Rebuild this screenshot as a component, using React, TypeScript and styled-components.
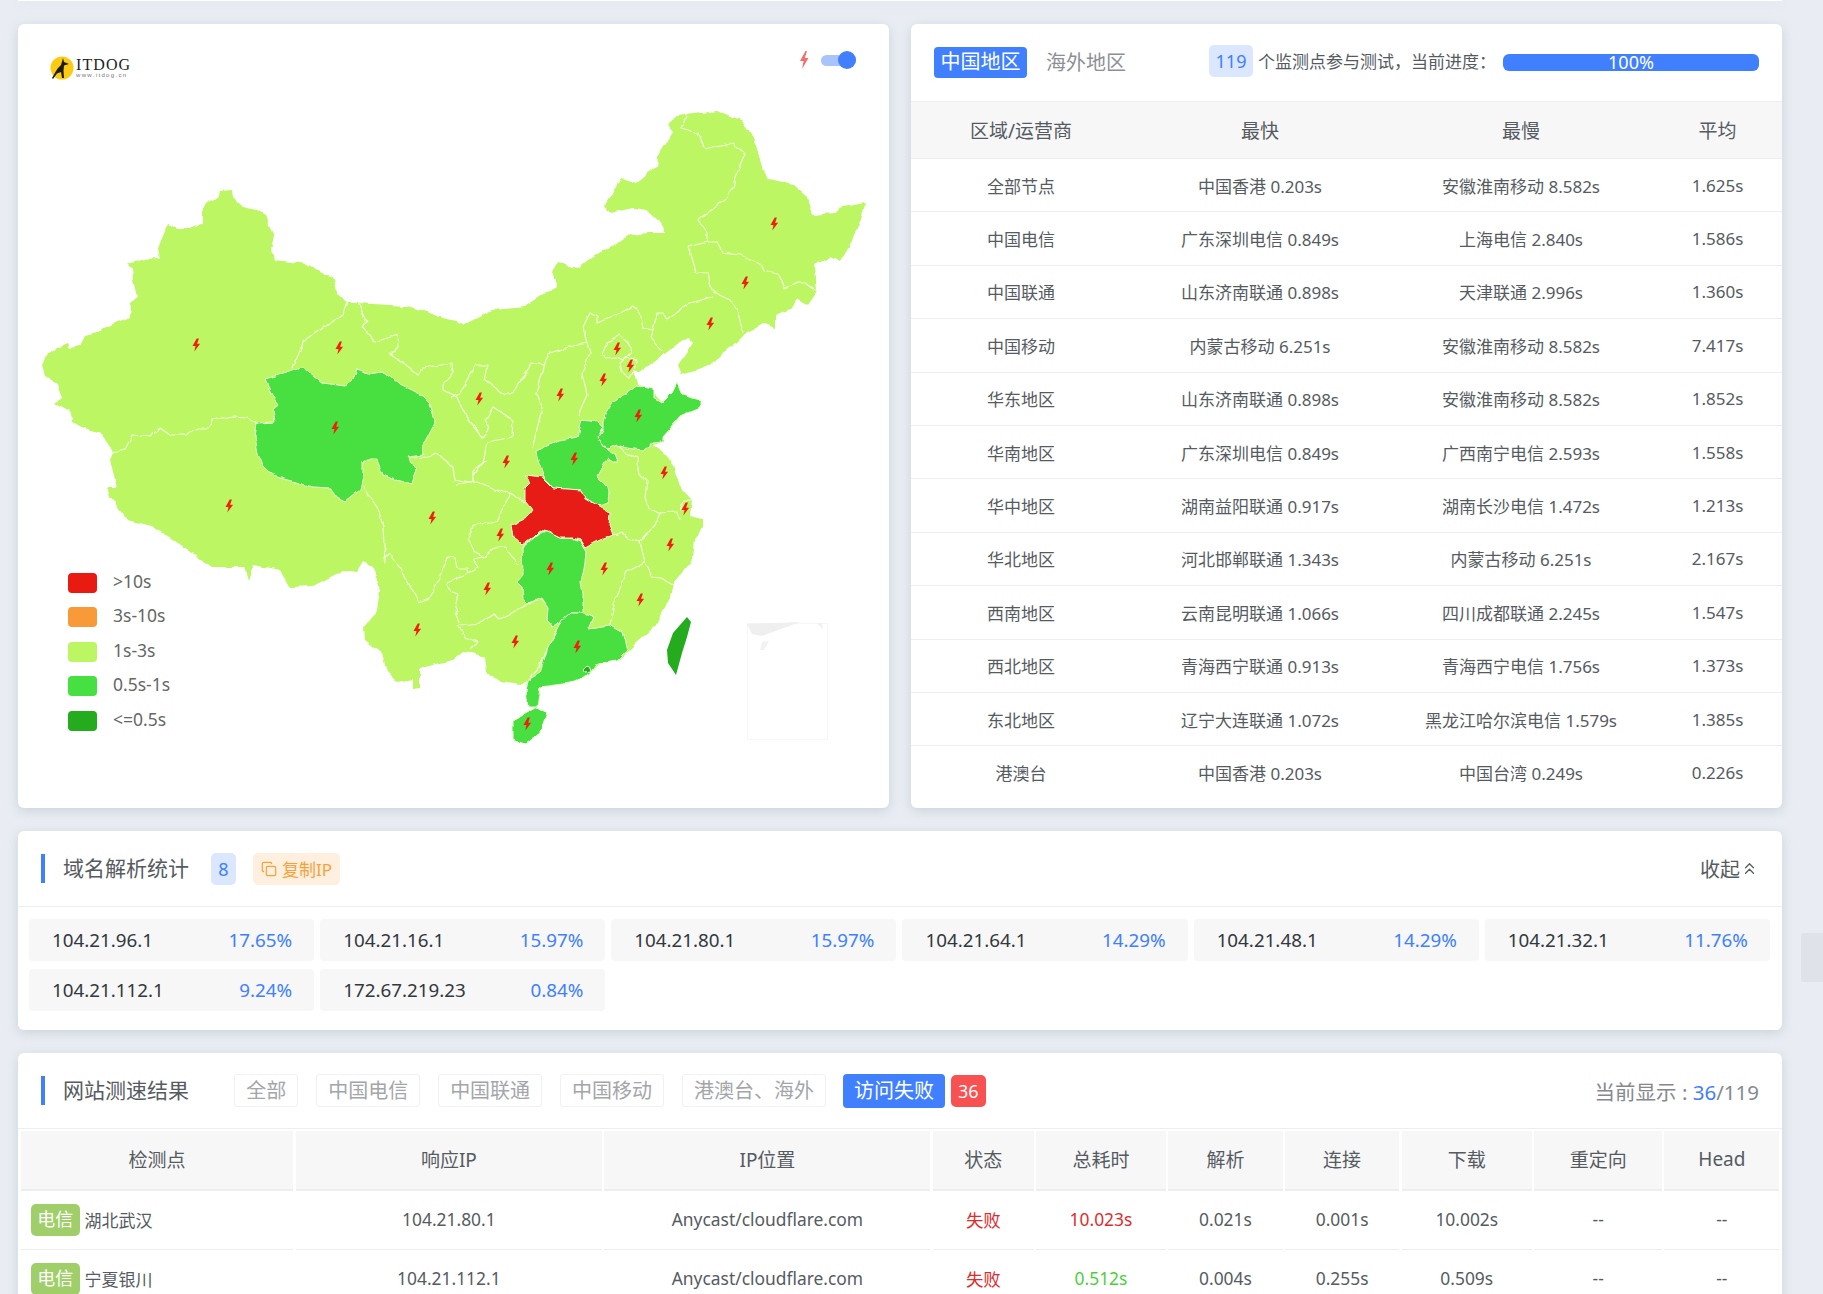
import React from 'react'
import styled, { createGlobalStyle } from 'styled-components'
import { ChevronsUp, Copy } from 'lucide-react'

const GlobalStyle = createGlobalStyle`
  html, body {
    margin: 0;
    height: 100%;
    overflow: hidden;
    background: #e9edf3;
  }
  body {
    font-family: "Noto Sans", "Noto Sans CJK SC", sans-serif;
    color: #555b61;
  }
  * {
    box-sizing: border-box;
  }
`

const BLUE = '#4080ff'
const LIGHT = '#bdf663'
const MID = '#46e040'
const RED = '#e81a12'
const DARK = '#25ab1e'

const Page = styled.div`
  display: flex;
  flex-direction: column;
  gap: 23px;
  padding: 0 41px 0 18px;
  height: 1294px;
  overflow: hidden;
`

const Card = styled.div`
  background: #fff;
  border-radius: 6px;
  box-shadow: 0 3px 12px rgba(110, 125, 150, 0.24);
`

const TopSliver = styled(Card)`
  height: 1px;
  flex: none;
  border-radius: 0 0 6px 6px;
`

const TwoCols = styled.div`
  display: grid;
  grid-template-columns: 871px 871px;
  gap: 22px;
  height: 784px;
  flex: none;
`

const MapCard = styled(Card)`
  position: relative;
  overflow: hidden;
`

const MapSvg = styled.svg`
  display: block;
  width: 871px;
  height: 784px;
`

const Logo = styled.div`
  position: absolute;
  left: 32px;
  top: 32px;
  display: flex;
  align-items: center;
  gap: 2px;
`

const LogoText = styled.div`
  display: flex;
  flex-direction: column;
  color: #222;
`

const LogoName = styled.span`
  font-family: "Liberation Serif", serif;
  font-size: 16px;
  line-height: 14px;
  letter-spacing: 1.1px;
`

const LogoUrl = styled.span`
  font-family: "Liberation Sans", sans-serif;
  font-size: 6px;
  line-height: 7px;
  letter-spacing: 1.35px;
  color: #777;
`

const SwitchRow = styled.div`
  position: absolute;
  right: 33px;
  top: 27px;
  display: flex;
  align-items: center;
  gap: 12px;
`

const SwitchTrack = styled.div`
  position: relative;
  width: 35px;
  height: 11px;
  border-radius: 6px;
  background: #a9c4fb;
`

const SwitchKnob = styled.div`
  position: absolute;
  right: 0;
  top: -3.5px;
  width: 18px;
  height: 18px;
  border-radius: 50%;
  background: ${BLUE};
`

const Legend = styled.ul`
  position: absolute;
  left: 50px;
  top: 549px;
  margin: 0;
  padding: 0;
  list-style: none;
  display: flex;
  flex-direction: column;
  gap: 14.4px;
`

const LegendItem = styled.li`
  display: flex;
  align-items: center;
  gap: 16px;
  height: 20px;
  font-size: 17.5px;
  color: #666;
`

const LegendLabel = styled.span`
  margin-top: -4px;
`

const Swatch = styled.span<{ $color: string }>`
  width: 29px;
  height: 20px;
  border-radius: 4px;
  background: ${(p) => p.$color};
`

const StatHead = styled.div`
  display: flex;
  align-items: center;
  height: 78px;
  padding: 0 23px;
  border-bottom: 1px solid #eceef0;
`

const TabOn = styled.div`
  width: 93px;
  height: 31px;
  border-radius: 4px;
  background: ${BLUE};
  color: #fff;
  font-size: 20px;
  line-height: 29px;
  text-align: center;
`

const TabOff = styled.div`
  margin-left: 19px;
  margin-top: -2px;
  font-size: 20px;
  color: #8c9095;
  width: 163px;
`

const CountBadge = styled.span`
  display: inline-block;
  width: 44px;
  height: 32px;
  margin-top: -3px;
  border-radius: 5px;
  background: #dbe7ff;
  color: ${BLUE};
  font-size: 18px;
  line-height: 32px;
  text-align: center;
`

const StatText = styled.span`
  margin-left: 5px;
  margin-top: -4px;
  font-size: 17px;
  color: #555b61;
  width: 245px;
  white-space: nowrap;
`

const Progress = styled.div`
  width: 256px;
  height: 17px;
  border-radius: 6px;
  background: ${BLUE};
  color: #fff;
  font-size: 18px;
  line-height: 16px;
  text-align: center;
`

const StatRow = styled.div<{ $head?: boolean }>`
  display: grid;
  grid-template-columns: 220px 258px 264px 129px;
  align-items: center;
  height: ${(p) => (p.$head ? '57px' : '53.4px')};
  text-align: center;
  white-space: nowrap;
  font-size: ${(p) => (p.$head ? '19px' : '17px')};
  background: ${(p) => (p.$head ? '#f7f7f8' : '#fff')};
  border-bottom: 1px solid #eceef0;
  &:last-child {
    border-bottom: 0;
  }
`

const SectionHead = styled.div<{ $h: number }>`
  display: flex;
  align-items: center;
  height: ${(p) => p.$h}px;
  padding: 0 23px;
  border-bottom: 1px solid #eceef0;
`

const TitleBar = styled.h2`
  margin: 0;
  padding-left: 18px;
  border-left: 4px solid ${BLUE};
  font-size: 21px;
  font-weight: 400;
  line-height: 29px;
  color: #555b61;
  white-space: nowrap;
`

const CountTag = styled(CountBadge)`
  width: 25px;
  margin-left: 22px;
  margin-top: 0;
`

const CopyTag = styled.span`
  display: flex;
  align-items: center;
  gap: 5px;
  margin-left: 17px;
  width: 87px;
  height: 32px;
  padding-left: 8px;
  border-radius: 5px;
  background: #ffefdf;
  color: #f7a239;
  font-size: 17px;
  white-space: nowrap;
`

const Collapse = styled.div`
  display: flex;
  align-items: center;
  margin-left: auto;
  font-size: 20px;
  color: #555b61;
`

const IpGrid = styled.div`
  display: grid;
  grid-template-columns: repeat(6, 285.17px);
  gap: 8px 6px;
  padding: 12px 11px 19px;
`

const IpItem = styled.div`
  display: flex;
  align-items: center;
  justify-content: space-between;
  height: 42px;
  padding: 0 22px 0 23px;
  border-radius: 4px;
  background: #f7f7f8;
  font-size: 18.8px;
  color: #33383d;
`

const Blue = styled.span`
  color: ${BLUE};
`

const Filters = styled.div`
  display: flex;
  align-items: center;
  margin-left: 45px;
  gap: 17.6px;
`

const FilterBtn = styled.button`
  height: 33px;
  padding: 0 11.2px;
  border: 1px solid #f1f1f1;
  border-radius: 3px;
  background: #fff;
  color: #a3a6a9;
  font-family: inherit;
  font-size: 20px;
  line-height: 29px;
  white-space: nowrap;
`

const FilterOn = styled(FilterBtn)`
  height: 34px;
  margin-left: -1px;
  border: 0;
  border-radius: 4px;
  background: ${BLUE};
  color: #fff;
`

const FailBadge = styled.span`
  display: inline-block;
  width: 35px;
  height: 32px;
  margin-left: -12px;
  border-radius: 5px;
  background: #f75151;
  color: #fff;
  font-size: 18px;
  line-height: 32px;
  text-align: center;
`

const ShowCount = styled.div`
  margin-left: auto;
  font-size: 20.5px;
  color: #85898e;
  white-space: nowrap;
`

const ResultTable = styled.div`
  padding: 2px 3px 0 2.5px;
`

const ResultRow = styled.div`
  display: grid;
  grid-template-columns: 272.9px 306.2px 326.1px 101px 129.5px 114.6px 114px 130.5px 127.6px 115px;
  column-gap: 2.4px;
`

const HeadCell = styled.div`
  height: 60px;
  padding-bottom: 2px;
  display: flex;
  align-items: center;
  justify-content: center;
  background: #f7f7f8;
  border-bottom: 2px solid #eceef0;
  font-size: 19px;
  color: #555b61;
`

const Cell = styled.div<{ $color?: string }>`
  height: 59px;
  padding-bottom: 2px;
  display: flex;
  align-items: center;
  justify-content: center;
  border-bottom: 1px solid #eceef0;
  font-size: 17.4px;
  color: ${(p) => p.$color || '#555b61'};
  white-space: nowrap;
`

const NodeCell = styled(Cell)`
  justify-content: flex-start;
  padding-left: 10.5px;
  gap: 5px;
  font-size: 17px;
`

const IspTag = styled.span`
  width: 48.5px;
  height: 32px;
  margin-top: 2px;
  border-radius: 5px;
  background: #a0cf6a;
  color: #fff;
  font-size: 18px;
  line-height: 30px;
  text-align: center;
`

const ScrollHandle = styled.div`
  position: fixed;
  right: 0;
  top: 933px;
  width: 22px;
  height: 49px;
  border-radius: 3px 0 0 3px;
  background: #dfe3e9;
`

const statRows = [
  ['全部节点', '中国香港 0.203s', '安徽淮南移动 8.582s', '1.625s'],
  ['中国电信', '广东深圳电信 0.849s', '上海电信 2.840s', '1.586s'],
  ['中国联通', '山东济南联通 0.898s', '天津联通 2.996s', '1.360s'],
  ['中国移动', '内蒙古移动 6.251s', '安徽淮南移动 8.582s', '7.417s'],
  ['华东地区', '山东济南联通 0.898s', '安徽淮南移动 8.582s', '1.852s'],
  ['华南地区', '广东深圳电信 0.849s', '广西南宁电信 2.593s', '1.558s'],
  ['华中地区', '湖南益阳联通 0.917s', '湖南长沙电信 1.472s', '1.213s'],
  ['华北地区', '河北邯郸联通 1.343s', '内蒙古移动 6.251s', '2.167s'],
  ['西南地区', '云南昆明联通 1.066s', '四川成都联通 2.245s', '1.547s'],
  ['西北地区', '青海西宁联通 0.913s', '青海西宁电信 1.756s', '1.373s'],
  ['东北地区', '辽宁大连联通 1.072s', '黑龙江哈尔滨电信 1.579s', '1.385s'],
  ['港澳台', '中国香港 0.203s', '中国台湾 0.249s', '0.226s'],
]

const ipRows = [
  ['104.21.96.1', '17.65%'],
  ['104.21.16.1', '15.97%'],
  ['104.21.80.1', '15.97%'],
  ['104.21.64.1', '14.29%'],
  ['104.21.48.1', '14.29%'],
  ['104.21.32.1', '11.76%'],
  ['104.21.112.1', '9.24%'],
  ['172.67.219.23', '0.84%'],
]

const filters = ['全部', '中国电信', '中国联通', '中国移动', '港澳台、海外']
const resultHead = ['检测点', '响应IP', 'IP位置', '状态', '总耗时', '解析', '连接', '下载', '重定向', 'Head']

const results = [
  { node: '湖北武汉', ip: '104.21.80.1', total: '10.023s', totalColor: '#e02b2b', dns: '0.021s', conn: '0.001s', down: '10.002s' },
  { node: '宁夏银川', ip: '104.21.112.1', total: '0.512s', totalColor: '#4ccf3a', dns: '0.004s', conn: '0.255s', down: '0.509s' },
]

const legend = [
  { label: '>10s', color: RED },
  { label: '3s-10s', color: '#f79a37' },
  { label: '1s-3s', color: LIGHT },
  { label: '0.5s-1s', color: MID },
  { label: '<=0.5s', color: DARK },
]

// outline of the whole country, page pixels
const outline =
  '42,365 45,357 58,347 68,343 70,348 80,346 85,336 97,333 103,328 130,317 131,303 137,297 133,280 132,268 128,264 152,257 160,259 158,248 168,224 178,228 193,228 203,223 203,207 207,202 218,198 220,190 232,189 233,197 243,207 257,210 265,215 275,235 272,250 275,260 307,264 323,273 333,277 338,293 347,303 358,303 407,306 422,310 438,317 457,321 463,325 493,310 525,307 540,297 557,287 552,272 557,263 578,268 592,257 617,243 632,235 647,233 664,233 660,222 647,210 633,208 610,213 605,206 621,178 637,183 657,167 658,157 673,132 667,125 677,116 717,111 743,122 752,135 762,165 768,180 793,185 807,197 812,215 835,213 838,208 865,203 861,215 852,242 840,262 830,257 815,265 817,292 808,305 798,299 793,308 775,315 775,327 765,323 743,335 730,348 707,367 682,375 678,365 693,343 688,337 680,342 657,360 640,372 633,372 637,383 647,387 655,395 662,402 672,393 677,383 682,395 700,400 700,408 682,415 663,437 663,442 653,445 663,452 672,462 680,487 692,500 690,515 703,518 703,528 695,538 693,560 673,583 670,597 663,610 655,627 637,642 627,652 618,660 600,663 590,675 570,683 540,687 537,707 528,707 526,692 528,680 520,685 500,682 487,672 485,657 472,653 463,652 453,660 420,668 420,688 413,689 413,680 398,683 387,672 382,653 365,640 364,627 377,610 380,590 373,567 363,562 357,572 344,570 313,586 290,587 281,570 253,565 248,580 244,567 212,567 187,549 152,526 127,520 110,497 107,487 117,487 110,460 113,453 102,433 83,428 73,422 72,412 55,403 62,398 58,383 45,377'

const borders = [
  '113,453 125,450 132,435 150,437 160,428 170,435 185,435 197,428 208,428 213,420 233,416 247,417 257,423',
  '347,303 343,313 332,322 317,332 303,342 293,368',
  '358,303 367,322 362,327 375,342 397,335 398,347 390,355 410,368 418,375 422,368 452,363 453,372 443,385 443,390 458,398',
  '450,397 460,393 475,365 488,365 485,380 505,395',
  '458,397 468,420 482,437 490,428 485,420 493,407 513,420 512,437 487,442 483,463 473,475 475,482 457,485',
  '505,395 513,393 532,363 545,365',
  '545,363 537,393 542,407 533,447',
  '545,363 550,353 565,348 587,343',
  '587,343 590,353 582,373 587,395 578,415',
  '587,343 583,327 590,313 597,317 597,323 613,317 633,306 640,313 643,328 653,330 650,337 662,352',
  '653,330 657,313 663,313 667,320 690,303 713,297',
  '713,292 730,300 737,310 743,333',
  '603,355 608,342 620,335 628,342 632,352 623,360 617,357 605,358 603,355',
  '620,363 627,357 637,360 635,372 628,377 622,372 620,363',
  '688,247 707,242 717,242 722,253 740,255 760,263 763,270 778,273 785,288 798,283 805,283 817,292',
  '688,247 695,272 708,273 712,290 715,292',
  '687,117 682,128 698,133 705,150 733,143 745,155 735,177 733,188 725,200 698,220 707,233 707,242',
  '363,487 378,507 383,527 385,563',
  '385,547 383,560 390,553 398,565 407,580 418,602 430,598 437,583 448,557 455,558 457,568 467,568 468,573',
  '468,573 447,582 450,592 458,595 455,607 460,623',
  '460,625 480,623 493,613 500,618 517,610 540,598 548,607',
  '458,625 465,637 478,642 472,650',
  '557,630 548,647 540,667 528,680',
  '410,458 427,457 437,453 453,467 455,480 468,483 478,482 503,492 510,493 525,502',
  '473,482 473,470 487,460',
  '510,493 503,507 497,522 473,525 468,540 473,548 483,558 495,548 505,547 518,565',
  '483,558 473,560 478,567 468,573',
  '617,445 627,453 637,458 640,473 647,482 645,497 648,507 658,513 677,512 680,520',
  '680,510 683,500 692,500',
  '610,535 622,532 627,538 640,542 655,525 660,513',
  '640,542 645,562 627,572 615,600 610,625',
  '645,562 652,577 660,578 673,585',
]

const provinces = [
  {
    color: MID,
    points:
      '265,379 303,368 313,375 323,383 345,386 352,382 357,369 368,373 382,371 398,383 422,395 430,403 435,422 422,447 423,455 408,457 417,470 412,483 395,480 383,475 377,460 363,460 363,477 360,490 345,502 337,498 330,488 313,487 277,477 262,467 258,453 255,437 257,423 275,422 273,410 278,404 270,393 267,383',
  },
  {
    color: MID,
    points:
      '537,450 560,440 578,437 582,420 598,422 603,428 597,438 607,450 615,455 618,462 613,462 607,458 597,477 608,488 609,493 608,502 597,505 585,498 581,490 553,488 543,475 538,458',
  },
  {
    color: MID,
    points:
      '603,422 605,415 613,402 627,393 638,385 653,388 653,397 662,403 672,393 677,383 682,395 700,400 700,408 682,415 663,437 663,442 653,443 642,450 627,448 617,445 607,449 597,438 603,430',
  },
  {
    color: MID,
    points:
      '522,547 540,532 548,532 560,538 570,538 580,542 586,552 585,563 581,582 583,593 583,613 570,613 560,623 553,627 547,620 548,607 542,598 528,603 523,598 522,587 517,582 523,575',
  },
  {
    color: RED,
    points:
      '525,475 542,477 553,488 581,490 585,498 597,505 610,513 609,525 613,535 600,540 585,548 580,540 572,538 560,538 548,532 540,530 533,537 522,545 513,537 511,525 527,518 533,510 525,500 525,487 530,482',
  },
  {
    color: MID,
    points:
      '557,630 562,620 570,613 582,613 593,617 588,628 610,625 622,632 627,650 617,660 598,663 590,675 570,683 540,687 537,707 528,707 526,692 528,680 540,673 548,647',
  },
  { color: MID, points: '513,720 537,707 547,713 540,732 525,744 513,740' },
  { color: DARK, points: '583,670 587,666 591,668 592,672 585,673' },
]

const bolts = [
  [196, 345], [339, 348], [335, 428], [229, 506], [432, 518], [479, 399], [506, 462],
  [560, 395], [603, 380], [617, 349], [630, 366], [638, 416], [574, 459], [664, 473],
  [685, 509], [670, 545], [604, 569], [640, 600], [550, 569], [500, 535], [487, 589],
  [417, 630], [515, 642], [577, 647], [527, 724], [774, 224], [745, 283], [710, 324],
]

const ChinaMap = () => (
  <MapSvg viewBox="18 24 871 784">
    <defs>
      <filter id="rough" filterUnits="userSpaceOnUse" x="18" y="24" width="871" height="784">
        <feTurbulence type="fractalNoise" baseFrequency="0.09" numOctaves="2" seed="4" result="n" />
        <feDisplacementMap in="SourceGraphic" in2="n" scale="5" xChannelSelector="R" yChannelSelector="G" />
        <feGaussianBlur stdDeviation="0.35" />
      </filter>
    </defs>
    <g filter="url(#rough)">
      <polygon points={outline} fill={LIGHT} />
      {borders.map((b, i) => (
        <polyline key={i} points={b} fill="none" stroke="#f2fbdc" strokeWidth="1.2" strokeLinejoin="round" />
      ))}
      {provinces.map((p, i) => (
        <polygon key={i} points={p.points} fill={p.color} stroke="#f2fbdc" strokeWidth="1" strokeLinejoin="round" />
      ))}
    </g>
    <polygon points="687,617 691,622 687,637 682,653 676,675 668,663 667,650 673,633" fill={DARK} />
    {bolts.map(([x, y], i) => (
      <path
        key={i}
        transform={`translate(${x - 4.5} ${y - 6.5})`}
        d="M5.2 0 L1 7.4 L4 7.4 L2.8 13 L8.6 5.2 L5.6 5.2 L7.4 0 Z"
        fill="#f0200f"
      />
    ))}
    <g>
      <rect x="747.5" y="623.5" width="80" height="116" fill="#fff" stroke="#f6f6f6" />
      <path d="M747 624 L800 622 L762 636 L752 634 Z" fill="#efefef" />
      <path d="M762 642 L769 641 L764 650 L760 650 Z" fill="#f2f2f2" />
      <path d="M816 623 L822 623 L823 629 Z" fill="#f2f2f2" />
    </g>
  </MapSvg>
)

const LogoMark = () => (
  <svg width="24" height="24" viewBox="0 0 24 24">
    <circle cx="12" cy="12" r="11.5" fill="#fdcc12" />
    <path d="M13 2 L14 6 L19 8 L14 9.500 L13.500 15 L14 22 L12 22 L11 16 L7 17.500 L3 23 L2 22 L6 15 L8 12 L11 9 Z" fill="#1d1b14" />
  </svg>
)

const BoltIcon = () => (
  <svg width="10" height="18" viewBox="0 0 10 18">
    <path d="M6.500 0 L1 10 L4.600 10 L3 18 L9.500 7 L5.800 7 L8 0 Z" fill="#f56c6c" />
  </svg>
)

function App() {
  return (
    <>
      <GlobalStyle />
      <Page>
        <TopSliver />
        <TwoCols>
          <MapCard>
            <ChinaMap />
            <Logo>
              <LogoMark />
              <LogoText>
                <LogoName>ITDOG</LogoName>
                <LogoUrl>www.itdog.cn</LogoUrl>
              </LogoText>
            </Logo>
            <SwitchRow>
              <BoltIcon />
              <SwitchTrack>
                <SwitchKnob />
              </SwitchTrack>
            </SwitchRow>
            <Legend>
              {legend.map((l) => (
                <LegendItem key={l.label}>
                  <Swatch $color={l.color} />
                  <LegendLabel>{l.label}</LegendLabel>
                </LegendItem>
              ))}
            </Legend>
          </MapCard>
          <Card>
            <StatHead>
              <TabOn>中国地区</TabOn>
              <TabOff>海外地区</TabOff>
              <CountBadge>119</CountBadge>
              <StatText>个监测点参与测试，当前进度：</StatText>
              <Progress>100%</Progress>
            </StatHead>
            <StatRow $head>
              <span>区域/运营商</span>
              <span>最快</span>
              <span>最慢</span>
              <span>平均</span>
            </StatRow>
            {statRows.map((r) => (
              <StatRow key={r[0]}>
                {r.map((c, i) => (
                  <span key={i}>{c}</span>
                ))}
              </StatRow>
            ))}
          </Card>
        </TwoCols>

        <Card>
          <SectionHead $h={76}>
            <TitleBar>域名解析统计</TitleBar>
            <CountTag>8</CountTag>
            <CopyTag>
              <Copy size={16} strokeWidth={1.8} />
              复制IP
            </CopyTag>
            <Collapse>
              收起
              <ChevronsUp size={19} strokeWidth={1.6} />
            </Collapse>
          </SectionHead>
          <IpGrid>
            {ipRows.map(([ip, pct]) => (
              <IpItem key={ip}>
                {ip}
                <Blue>{pct}</Blue>
              </IpItem>
            ))}
          </IpGrid>
        </Card>

        <Card>
          <SectionHead $h={76}>
            <TitleBar>网站测速结果</TitleBar>
            <Filters>
              {filters.map((f) => (
                <FilterBtn key={f}>{f}</FilterBtn>
              ))}
              <FilterOn>访问失败</FilterOn>
              <FailBadge>36</FailBadge>
            </Filters>
            <ShowCount>
              当前显示 : <Blue>36</Blue>/119
            </ShowCount>
          </SectionHead>
          <ResultTable>
            <ResultRow>
              {resultHead.map((h) => (
                <HeadCell key={h}>{h}</HeadCell>
              ))}
            </ResultRow>
            {results.map((r) => (
              <ResultRow key={r.node}>
                <NodeCell>
                  <IspTag>电信</IspTag>
                  {r.node}
                </NodeCell>
                <Cell>{r.ip}</Cell>
                <Cell>Anycast/cloudflare.com</Cell>
                <Cell $color="#e02b2b">失败</Cell>
                <Cell $color={r.totalColor}>{r.total}</Cell>
                <Cell>{r.dns}</Cell>
                <Cell>{r.conn}</Cell>
                <Cell>{r.down}</Cell>
                <Cell>--</Cell>
                <Cell>--</Cell>
              </ResultRow>
            ))}
          </ResultTable>
        </Card>
      </Page>
      <ScrollHandle />
    </>
  )
}

export default App
